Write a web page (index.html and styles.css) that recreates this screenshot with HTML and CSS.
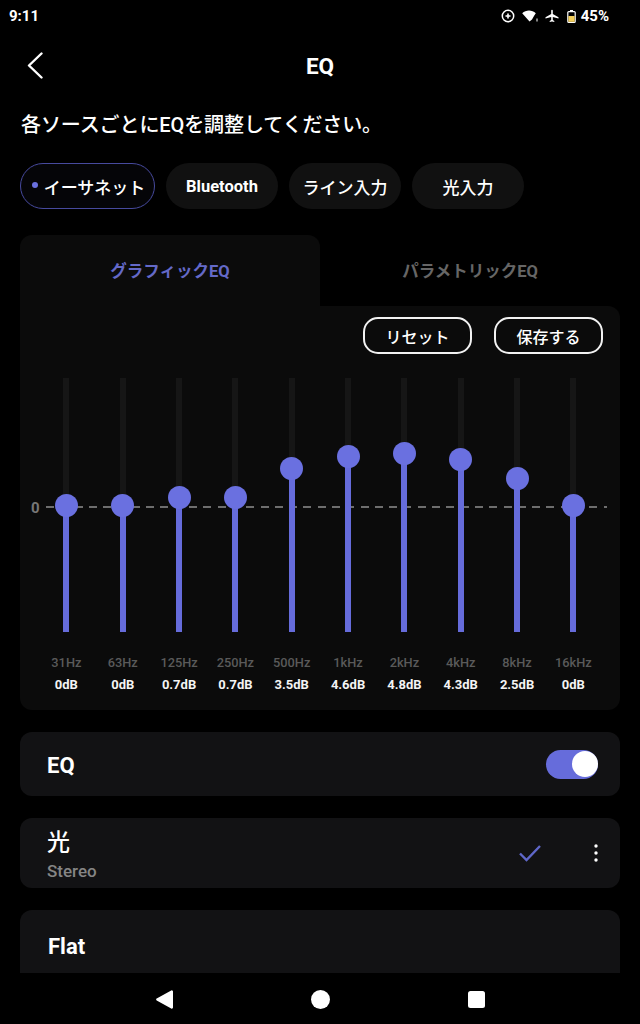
FILE: index.html
```html
<!DOCTYPE html>
<html lang="ja">
<head>
<meta charset="utf-8">
<title>EQ</title>
<link rel="stylesheet" href="styles.css">
</head>
<body>
<div class="screen">
  <div class="content">
    <div class="status">
      <span class="time">9:11</span>
      <div class="status-icons">
        <svg class="ic-dnd" width="14" height="14" viewBox="0 0 14 14"><circle cx="7" cy="7" r="5.7" fill="none" stroke="#fff" stroke-width="1.5"/><path d="M7 4.500v5M4.500 7h5" stroke="#fff" stroke-width="1.600"/></svg>
        <svg class="ic-wifi" width="17" height="14" viewBox="0 0 17 14"><path d="M0.200 4.200C4 .6 10 .6 13.800 4.200L12 7 10 10.500 7.500 12.500z" fill="#fff"/><rect x="14.300" y="9.500" width="1.400" height="3" fill="#bbb"/></svg>
        <svg class="ic-plane" width="14" height="14" viewBox="0 0 14 14"><path d="M6.200 1.500C6.200.6 7.800.6 7.800 1.500V5l5.700 3.200v1.400L7.800 7.900v3l1.500 1.100V13L7 12.400 4.700 13v-1l1.500-1.100v-3L.5 9.600V8.200L6.200 5z" fill="#fff"/></svg>
        <svg class="ic-batt" width="9" height="13" viewBox="0 0 9 13"><rect x="3" y="0" width="3" height="2" fill="#fff"/><rect x="0.800" y="1.600" width="7.400" height="10.800" rx="1" fill="none" stroke="#fff" stroke-width="1.200"/><rect x="1.400" y="6" width="6.200" height="5.800" fill="#f4cf5a"/></svg>
        <span class="pct">45%</span>
      </div>
    </div>

    <header class="topbar">
      <svg class="back" width="18" height="27" viewBox="0 0 18 27"><path d="M15.500 1.500L3 13.500 15.500 25.500" fill="none" stroke="#fff" stroke-width="2.400" stroke-linecap="round" stroke-linejoin="round"/></svg>
      <h1 class="title">EQ</h1>
    </header>

    <p class="lead">各ソースごとにEQを調整してください。</p>

    <div class="chips">
      <div class="chip chip-active"><span class="dot"></span>イーサネット</div>
      <div class="chip chip-bt">Bluetooth</div>
      <div class="chip chip-line">ライン入力</div>
      <div class="chip chip-opt">光入力</div>
    </div>

    <div class="tabs">
      <div class="tab tab-on">グラフィックEQ</div>
      <div class="tab tab-off">パラメトリックEQ</div>
    </div>

    <section class="panel">
      <div class="actions">
        <div class="btn">リセット</div>
        <div class="btn">保存する</div>
      </div>
      <div class="chart">
        <span class="zero-label">0</span>
        <span class="zero-line"></span>
        <div class="col"><div class="track"><div class="fill" style="height:127px"><span class="thumb"></span></div></div></div>
        <div class="col"><div class="track"><div class="fill" style="height:127px"><span class="thumb"></span></div></div></div>
        <div class="col"><div class="track"><div class="fill" style="height:134.500px"><span class="thumb"></span></div></div></div>
        <div class="col"><div class="track"><div class="fill" style="height:134.500px"><span class="thumb"></span></div></div></div>
        <div class="col"><div class="track"><div class="fill" style="height:164px"><span class="thumb"></span></div></div></div>
        <div class="col"><div class="track"><div class="fill" style="height:176px"><span class="thumb"></span></div></div></div>
        <div class="col"><div class="track"><div class="fill" style="height:178.500px"><span class="thumb"></span></div></div></div>
        <div class="col"><div class="track"><div class="fill" style="height:173px"><span class="thumb"></span></div></div></div>
        <div class="col"><div class="track"><div class="fill" style="height:154px"><span class="thumb"></span></div></div></div>
        <div class="col"><div class="track"><div class="fill" style="height:127px"><span class="thumb"></span></div></div></div>
      </div>
      <div class="bands">
        <div class="band"><span class="hz">31Hz</span><span class="db">0dB</span></div>
        <div class="band"><span class="hz">63Hz</span><span class="db">0dB</span></div>
        <div class="band"><span class="hz">125Hz</span><span class="db">0.7dB</span></div>
        <div class="band"><span class="hz">250Hz</span><span class="db">0.7dB</span></div>
        <div class="band"><span class="hz">500Hz</span><span class="db">3.5dB</span></div>
        <div class="band"><span class="hz">1kHz</span><span class="db">4.6dB</span></div>
        <div class="band"><span class="hz">2kHz</span><span class="db">4.8dB</span></div>
        <div class="band"><span class="hz">4kHz</span><span class="db">4.3dB</span></div>
        <div class="band"><span class="hz">8kHz</span><span class="db">2.5dB</span></div>
        <div class="band"><span class="hz">16kHz</span><span class="db">0dB</span></div>
      </div>
    </section>

    <div class="row row-eq">
      <span class="row-title">EQ</span>
      <span class="toggle"><span class="knob"></span></span>
    </div>

    <div class="row row-preset">
      <div class="preset-text">
        <span class="preset-name">光</span>
        <span class="preset-sub">Stereo</span>
      </div>
      <svg class="check" width="24" height="20" viewBox="0 0 24 20"><path d="M2 10.500L8.500 17 22 3" fill="none" stroke="#5f67c9" stroke-width="2.400"/></svg>
      <svg class="more" width="6" height="20" viewBox="0 0 6 20"><circle cx="3" cy="3" r="1.700" fill="#fff"/><circle cx="3" cy="10" r="1.700" fill="#fff"/><circle cx="3" cy="17" r="1.700" fill="#fff"/></svg>
    </div>

    <div class="row row-flat">
      <span class="row-title">Flat</span>
    </div>
  </div>

  <nav class="navbar">
    <svg width="17" height="19" viewBox="0 0 17 19"><path d="M17 1.500V17.500a1.200 1.200 0 0 1-1.800 1L.7 10.400a1 1 0 0 1 0-1.800L15.200.5a1.200 1.200 0 0 1 1.800 1z" fill="#fff"/></svg>
    <svg width="19" height="19" viewBox="0 0 19 19"><circle cx="9.500" cy="9.500" r="9.500" fill="#fff"/></svg>
    <svg width="17" height="17" viewBox="0 0 17 17"><rect width="17" height="17" rx="2.500" fill="#fff"/></svg>
  </nav>
</div>
</body>
</html>
```

FILE: styles.css
```css
* { box-sizing: border-box; }

html, body {
  margin: 0;
  padding: 0;
  background: #000;
}

body {
  font-family: Roboto, "Noto Sans CJK JP", sans-serif;
  color: #fff;
}

.screen {
  width: 640px;
  height: 1024px;
  display: flex;
  flex-direction: column;
  overflow: hidden;
  background: #000;
}

.content {
  height: 973px;
  overflow: hidden;
  padding: 0 20px;
  flex: none;
}

/* status bar */
.status {
  height: 32px;
  margin: 0 -20px;
  padding: 0 31px 0 9px;
  display: flex;
  align-items: center;
  justify-content: space-between;
}

.time {
  font-size: 15px;
  font-weight: 700;
}

.status-icons {
  display: flex;
  align-items: center;
}

.ic-dnd { margin-right: 7px; }
.ic-wifi { margin-right: 6px; }
.ic-plane { margin-right: 8px; }
.ic-batt { margin-right: 5px; }

.pct {
  font-size: 15px;
  font-weight: 700;
}

/* top bar */
.topbar {
  height: 68px;
  display: flex;
  align-items: center;
  justify-content: center;
  position: relative;
}

.back {
  position: absolute;
  left: 6px;
  top: 20px;
}

.title {
  margin: 0;
  font-size: 22.500px;
  font-weight: 700;
}

.lead {
  margin: 9px 0 0 1px;
  height: 32px;
  line-height: 32px;
  font-size: 20px;
  font-weight: 500;
  letter-spacing: -0.100px;
}

/* source chips */
.chips {
  margin-top: 22px;
  display: flex;
  gap: 11px;
}

.chip {
  height: 46px;
  border-radius: 23px;
  background: #111;
  display: flex;
  align-items: center;
  justify-content: center;
  font-size: 17px;
  font-weight: 500;
}

.chip-active {
  width: 135px;
  background: #050508;
  border: 1px solid #474a9e;
  padding-left: 2px;
}

.dot {
  width: 6px;
  height: 6px;
  border-radius: 50%;
  background: #6a70de;
  margin-right: 6px;
  margin-bottom: 3px;
}

.chip-bt { width: 112px; font-weight: 700; font-size: 16.500px; }
.chip-line { width: 112px; }
.chip-opt { width: 112px; }

/* tabs */
.tabs {
  margin-top: 26px;
  display: flex;
  height: 71px;
}

.tab {
  width: 300px;
  padding-top: 25px;
  text-align: center;
  font-size: 16.500px;
  font-weight: 700;
  line-height: 24px;
}

.tab-on {
  background: #0b0b0b;
  border-radius: 12px 12px 0 0;
  color: #6469c8;
}

.tab-off { color: #666; }

/* panel */
.panel {
  height: 404px;
  background: #0b0b0b;
  border-radius: 0 12px 12px 12px;
  padding-top: 11px;
}

.actions {
  display: flex;
  justify-content: flex-end;
  gap: 22px;
  padding-right: 17px;
}

.btn {
  width: 109px;
  height: 37px;
  border: 2px solid #f2f2f2;
  border-radius: 15px;
  display: flex;
  align-items: center;
  justify-content: center;
  font-size: 16px;
  font-weight: 500;
}

.chart {
  position: relative;
  margin-top: 24px;
  height: 254px;
  padding: 0 18.440px 0 18.230px;
  display: grid;
  grid-template-columns: repeat(10, 1fr);
}

.zero-label {
  position: absolute;
  left: 11px;
  top: 120px;
  font-size: 15px;
  line-height: 20px;
  font-weight: 700;
  color: #777;
}

.zero-line {
  position: absolute;
  left: 26px;
  right: 13px;
  top: 128px;
  height: 2px;
  background: repeating-linear-gradient(90deg, #6e6e6e 0 8px, transparent 8px 14.300px);
}

.col {
  display: flex;
  justify-content: center;
}

.track {
  position: relative;
  width: 6px;
  height: 100%;
  background: #161616;
  display: flex;
  align-items: flex-end;
}

.fill {
  position: relative;
  width: 100%;
  background: #666cdb;
}

.thumb {
  position: absolute;
  left: -8.500px;
  top: -11.500px;
  width: 23px;
  height: 23px;
  border-radius: 50%;
  background: #6a70e0;
}

.bands {
  margin-top: 22px;
  padding: 0 18.440px 0 18.230px;
  display: grid;
  grid-template-columns: repeat(10, 1fr);
}

.band {
  display: flex;
  flex-direction: column;
  align-items: center;
}

.hz {
  height: 18px;
  line-height: 18px;
  font-size: 12.800px;
  font-weight: 500;
  color: #5a5a5a;
  white-space: nowrap;
}

.db {
  margin-top: 4px;
  height: 18px;
  line-height: 18px;
  font-size: 13px;
  font-weight: 700;
  color: #f4f4f4;
  white-space: nowrap;
}

/* rows */
.row {
  margin-top: 22px;
  background: #121214;
  border-radius: 12px;
  padding: 0 21px 0 27px;
  display: flex;
  align-items: center;
}

.row-title {
  font-size: 22px;
  font-weight: 700;
}

.row-eq {
  height: 64px;
  justify-content: space-between;
  padding-right: 22px;
}

.row-eq .row-title {
  padding-top: 2px;
}

.toggle {
  position: relative;
  width: 52px;
  height: 29px;
  border-radius: 15px;
  background: #666cdb;
}

.knob {
  position: absolute;
  right: 0;
  top: 1.500px;
  width: 26px;
  height: 26px;
  border-radius: 50%;
  background: #fff;
}

.row-preset { height: 70px; }

.preset-text {
  flex: 1;
  display: flex;
  flex-direction: column;
  padding-top: 3px;
}

.preset-name {
  font-size: 23px;
  line-height: 30px;
  font-weight: 500;
  margin-top: -1px;
}

.preset-sub {
  font-size: 17px;
  line-height: 20px;
  font-weight: 500;
  color: #858585;
  margin-top: 3px;
}

.check { margin-right: 51px; }

.row-flat {
  height: 120px;
  align-items: flex-start;
  padding-top: 24px;
  padding-left: 28px;
}

/* nav bar */
.navbar {
  height: 51px;
  flex: none;
  background: #000;
  display: flex;
  align-items: center;
  justify-content: center;
  gap: 138px;
  padding-left: 1px;
  padding-top: 1px;
}
```
